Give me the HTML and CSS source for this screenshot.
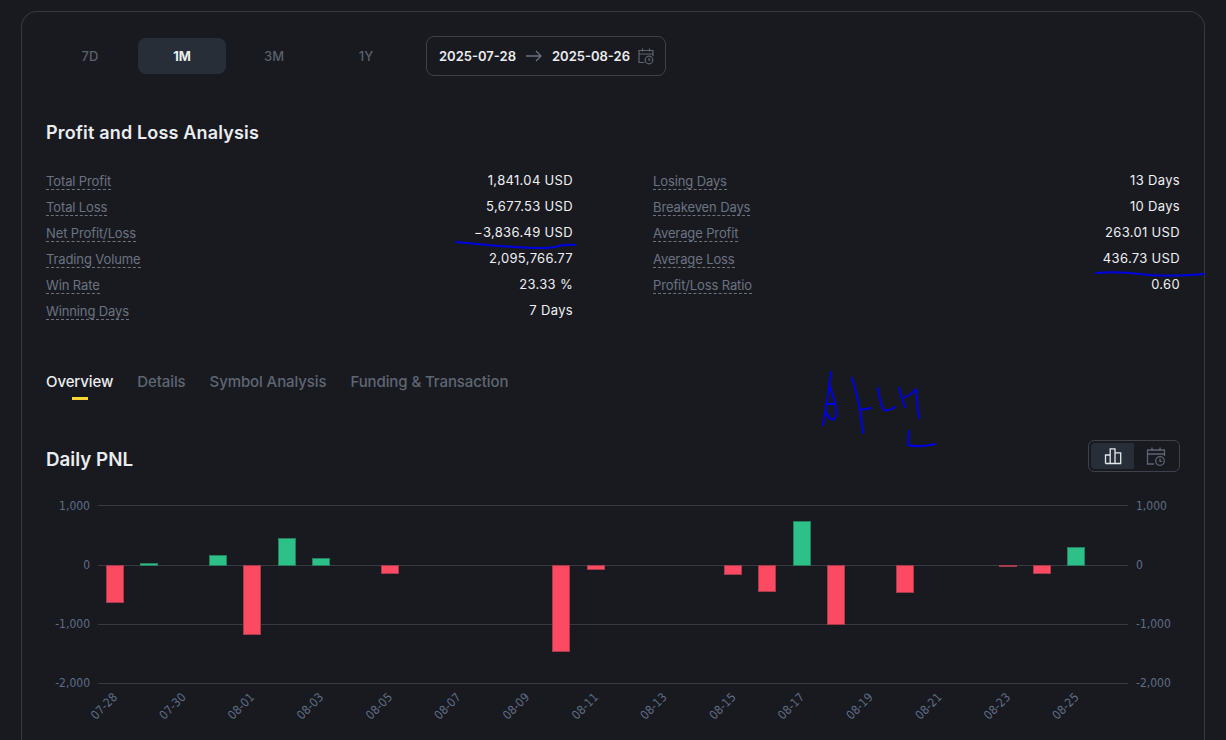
FILE: index.html
```html
<!DOCTYPE html>
<html lang="en">
<head>
<meta charset="utf-8">
<title>Profit and Loss Analysis</title>
<link rel="stylesheet" href="styles.css">
</head>
<body>
<main class="card">
  <div class="range-row">
    <div class="periods">
      <button class="period">7D</button>
      <button class="period is-active">1M</button>
      <button class="period">3M</button>
      <button class="period">1Y</button>
    </div>
    <div class="date-box">
      <span class="date">2025-07-28</span>
      <svg class="arrow" width="16" height="12" viewBox="0 0 16 12"><path d="M0 6H15M10 1l5 5-5 5" fill="none" stroke="#6a707c" stroke-width="1.3"/></svg>
      <span class="date">2025-08-26</span>
      <svg class="cal" width="16" height="18" viewBox="0 0 16 18"><g fill="none" stroke="#5e6470" stroke-width="1.2"><path d="M6.5 15.5H1V3.5H15V9M1 7H15M4.5 1.5V4.5M11.500 1.5V4.500"/><circle cx="11" cy="13" r="3.800"/><path d="M11 11V13.200H12.500"/></g></svg>
    </div>
  </div>

  <h2 class="title">Profit and Loss Analysis</h2>

  <div class="stats">
    <dl class="stat-col">
      <div class="stat"><dt>Total Profit</dt><dd>1,841.04 USD</dd></div>
      <div class="stat"><dt>Total Loss</dt><dd>5,677.53 USD</dd></div>
      <div class="stat"><dt>Net Profit/Loss</dt><dd>−3,836.49 USD</dd></div>
      <div class="stat"><dt>Trading Volume</dt><dd>2,095,766.77</dd></div>
      <div class="stat"><dt>Win Rate</dt><dd>23.33 %</dd></div>
      <div class="stat"><dt>Winning Days</dt><dd>7 Days</dd></div>
    </dl>
    <dl class="stat-col">
      <div class="stat"><dt>Losing Days</dt><dd>13 Days</dd></div>
      <div class="stat"><dt>Breakeven Days</dt><dd>10 Days</dd></div>
      <div class="stat"><dt>Average Profit</dt><dd>263.01 USD</dd></div>
      <div class="stat"><dt>Average Loss</dt><dd>436.73 USD</dd></div>
      <div class="stat"><dt>Profit/Loss Ratio</dt><dd>0.60</dd></div>
    </dl>
  </div>

  <nav class="tabs">
    <a class="tab is-active">Overview</a>
    <a class="tab">Details</a>
    <a class="tab">Symbol Analysis</a>
    <a class="tab">Funding &amp; Transaction</a>
  </nav>

  <div class="chart-head">
    <h3 class="chart-title">Daily PNL</h3>
    <div class="toggle">
      <span class="toggle-btn is-active">
        <svg width="18" height="18" viewBox="0 0 18 18"><path d="M1.500 16.500V8H6.200V16.500M6.200 16.500V1.800H11V16.500M11 16.500V5.800H16.700V16.500ZM1.500 16.500H16.700" fill="none" stroke="#e6e8ec" stroke-width="1.300"/></svg>
      </span>
      <span class="toggle-btn">
        <svg width="20" height="20" viewBox="0 0 20 20"><g fill="none" stroke="#5e6470" stroke-width="1.300"><path d="M8 18H1.500V4H18.500V10M1.500 8H18.500M6 1.500V5M14 1.500V5"/><circle cx="14" cy="15" r="4.300"/><path d="M14 12.500V15.300H16"/></g></svg>
      </span>
    </div>
  </div>

  <svg class="chart" width="1134" height="250" viewBox="46 490 1134 250">
    <g class="grid">
      <line x1="98" x2="1128" y1="505.500" y2="505.500"/>
      <line x1="98" x2="1128" y1="565.500" y2="565.500"/>
      <line x1="98" x2="1128" y1="624.500" y2="624.500"/>
      <line x1="98" x2="1128" y1="683.500" y2="683.500"/>
    </g>
    <g class="axis-l">
      <text x="90" y="510">1,000</text>
      <text x="90" y="569">0</text>
      <text x="90" y="628">-1,000</text>
      <text x="90" y="687">-2,000</text>
    </g>
    <g class="axis-r">
      <text x="1136" y="510">1,000</text>
      <text x="1136" y="569">0</text>
      <text x="1136" y="628">-1,000</text>
      <text x="1136" y="687">-2,000</text>
    </g>
    <g class="loss">
      <rect x="106.500" y="565.500" width="17" height="37"/>
      <rect x="243.500" y="565.500" width="17" height="69"/>
      <rect x="381.500" y="565.500" width="17" height="8"/>
      <rect x="552.500" y="565.500" width="17" height="86"/>
      <rect x="587.500" y="565.500" width="17" height="4"/>
      <rect x="724.500" y="565.500" width="17" height="9"/>
      <rect x="758.500" y="565.500" width="17" height="26"/>
      <rect x="827.500" y="565.500" width="17" height="59"/>
      <rect x="896.500" y="565.500" width="17" height="27"/>
      <rect x="999.500" y="565.500" width="17" height="1"/>
      <rect x="1033.500" y="565.500" width="17" height="8"/>
    </g>
    <g class="gain">
      <rect x="140.500" y="563.500" width="17" height="2"/>
      <rect x="209.500" y="555.500" width="17" height="10"/>
      <rect x="278.500" y="538.500" width="17" height="27"/>
      <rect x="312.500" y="558.500" width="17" height="7"/>
      <rect x="793.500" y="521.500" width="17" height="44"/>
      <rect x="1067.500" y="547.500" width="17" height="18"/>
    </g>
    <g class="axis-x">
      <text transform="translate(118 698) rotate(-45)">07-28</text>
      <text transform="translate(186.500 698) rotate(-45)">07-30</text>
      <text transform="translate(255 698) rotate(-45)">08-01</text>
      <text transform="translate(324 698) rotate(-45)">08-03</text>
      <text transform="translate(393 698) rotate(-45)">08-05</text>
      <text transform="translate(461.500 698) rotate(-45)">08-07</text>
      <text transform="translate(530 698) rotate(-45)">08-09</text>
      <text transform="translate(599 698) rotate(-45)">08-11</text>
      <text transform="translate(667.500 698) rotate(-45)">08-13</text>
      <text transform="translate(736.500 698) rotate(-45)">08-15</text>
      <text transform="translate(805 698) rotate(-45)">08-17</text>
      <text transform="translate(873.500 698) rotate(-45)">08-19</text>
      <text transform="translate(942.500 698) rotate(-45)">08-21</text>
      <text transform="translate(1011 698) rotate(-45)">08-23</text>
      <text transform="translate(1079.500 698) rotate(-45)">08-25</text>
    </g>
  </svg>
</main>

<svg class="scribble" width="1226" height="740" viewBox="0 0 1226 740">
  <g fill="none" stroke="#0000e6" stroke-width="2" stroke-linecap="round" stroke-linejoin="round">
    <path d="M456 242C475 244 495 246 515 247C530 248 545 249 555 247C560 245 566 244 575 245"/>
    <path d="M1096 273C1110 272 1125 272 1140 274C1155 276 1180 276 1204 274"/>
    <path d="M823 425C826 410 829 390 831 372"/>
    <path d="M829 384C833 395 837 405 836 415C834 424 829 418 826 412M826 404H835"/>
    <path d="M852 378C856 390 858 400 860 410C861 418 862 425 863 433"/>
    <path d="M860 410L871 408"/>
    <path d="M878 388C879 396 881 405 884 410C888 411 892 409 895 407"/>
    <path d="M899 388C901 395 903 402 905 407M905 397C908 396 912 394 916 389C917 400 918 412 919 418"/>
    <path d="M909 431C909 436 908 441 908 445C915 447 926 446 935 444"/>
  </g>
</svg>
</body>
</html>
```

FILE: styles.css
```css
html, body {
  margin: 0;
  height: 740px;
  overflow: hidden;
  background: #191a20;
}
body {
  position: relative;
  font-family: "Inter", "Liberation Sans", sans-serif;
  color: #eaecef;
}
.card {
  box-sizing: border-box;
  width: 1184px;
  height: 729px;
  margin: 11px 0 0 21px;
  padding: 24px 24px 0;
  border: 1px solid #343842;
  border-bottom: 0;
  border-radius: 16px 16px 0 0;
}
.range-row {
  display: flex;
  align-items: center;
  gap: 16px;
  height: 40px;
}
.periods {
  display: flex;
  gap: 4px;
}
.period {
  width: 88px;
  height: 36px;
  border: 0;
  border-radius: 8px;
  background: transparent;
  color: #5a606c;
  font: 500 13px "Inter", sans-serif;
}
.period.is-active {
  background: #282e38;
  color: #eaecef;
  font-weight: 700;
}
.date-box {
  box-sizing: border-box;
  display: flex;
  align-items: center;
  width: 240px;
  height: 40px;
  padding: 0 12px;
  border: 1px solid #3c414c;
  border-radius: 8px;
  font-size: 13px;
  font-weight: 600;
}
.date { white-space: nowrap; }
.arrow { margin: 0 10px; flex: none; }
.cal { margin-left: 8px; flex: none; }
.title {
  margin: 44px 0 0;
  font-size: 18px;
  line-height: 26px;
  font-weight: 600;
  letter-spacing: 0.17px;
}
.stats {
  display: grid;
  grid-template-columns: 527px 527px;
  column-gap: 80px;
  margin-top: 22px;
}
.stat-col { margin: 0; }
.stat {
  display: flex;
  justify-content: space-between;
  align-items: center;
  height: 26px;
  font-size: 13px;
}
.stat dt {
  color: #6b7381;
  line-height: 16px;
  letter-spacing: -0.12px;
  border-bottom: 1px dashed #6b7381;
}
.stat dd {
  margin: 0;
  padding-bottom: 2px;
  color: #eef0f3;
  font-weight: 400;
  letter-spacing: 0.33px;
}
.tabs {
  display: flex;
  gap: 24px;
  margin-top: 46px;
  height: 30px;
}
.tab {
  position: relative;
  color: #5f6673;
  font-size: 15px;
  font-weight: 500;
  line-height: 24px;
  letter-spacing: -0.1px;
}
.tab.is-active { color: #eaecef; }
.tab.is-active::after {
  content: "";
  position: absolute;
  left: 50%;
  bottom: 0;
  width: 16px;
  height: 3px;
  margin-left: -8px;
  background: #fcd535;
}
.chart-head {
  display: flex;
  justify-content: space-between;
  align-items: center;
  margin-top: 40px;
  height: 32px;
}
.chart-title {
  margin: 6px 0 0;
  font-size: 18.800px;
  font-weight: 600;
}
.toggle {
  box-sizing: border-box;
  display: flex;
  width: 92px;
  height: 32px;
  padding: 2px;
  border: 1px solid #3c414c;
  border-radius: 6px;
}
.toggle-btn {
  display: flex;
  align-items: center;
  justify-content: center;
  width: 43px;
  height: 26px;
  border-radius: 4px 0 0 4px;
}
.toggle-btn.is-active { background: #282e38; }
.chart {
  display: block;
  margin-top: 18px;
}
.grid line { stroke: #363a43; stroke-width: 1; }
.chart text {
  font-family: "DejaVu Sans", sans-serif;
  font-stretch: condensed;
  font-size: 12px;
  fill: #5f6d86;
}
.axis-l text { text-anchor: end; }
.axis-x text { text-anchor: end; }
.loss rect { fill: #fc4a62; stroke: #a93a4c; stroke-width: 1; }
.gain rect { fill: #2dc088; stroke: #25805f; stroke-width: 1; }
.scribble {
  position: absolute;
  left: 0;
  top: 0;
  pointer-events: none;
}
```
